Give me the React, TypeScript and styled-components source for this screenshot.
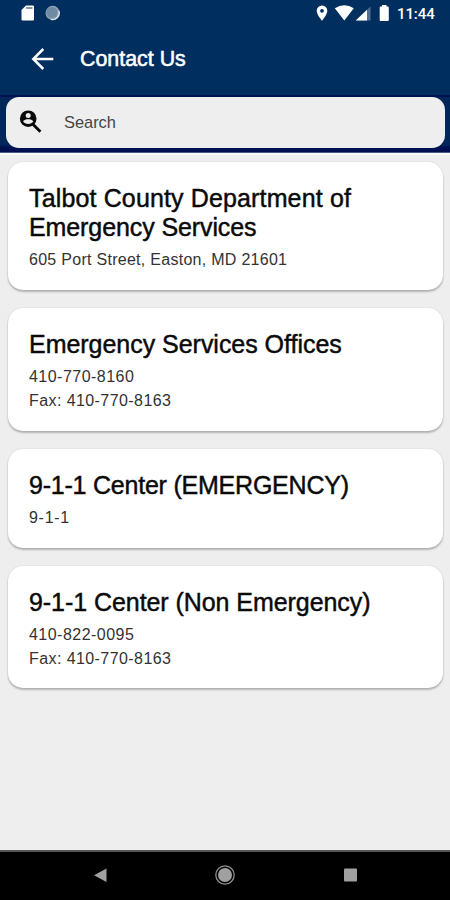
import React from "react";
import styled, { createGlobalStyle } from "styled-components";

const Global = createGlobalStyle`
  * { box-sizing: border-box; }
  body { margin: 0; background: #eee; font-family: "Liberation Sans", Arial, sans-serif; }
`;

const Screen = styled.div`
  width: 450px;
  height: 900px;
  display: flex;
  flex-direction: column;
  background: #eeeeee;
  overflow: hidden;
`;

const Header = styled.header`
  height: 153px;
  flex: none;
  background: #002e5f;
  border-bottom: 1px solid #4a5b86;
`;

const StatusBar = styled.div`
  height: 27px;
  display: flex;
  justify-content: space-between;
`;

const Time = styled.span`
  font: 500 15px/28px Roboto, sans-serif;
  color: #fff;
  width: 53px;
  letter-spacing: -0.1px;
`;

const StatusIcons = styled.div`
  display: flex;
`;

const TitleBar = styled.div`
  height: 68px;
  display: flex;
  align-items: center;
  padding: 0 0 4px 30px;
  gap: 26px;
`;

const Title = styled.h1`
  margin: 0;
  font-size: 21.4px;
  font-weight: 400;
  line-height: 26px;
  color: #fff;
  -webkit-text-stroke: 0.55px #fff;
`;

const SearchStrip = styled.div`
  height: 57px;
  padding: 2px 5px 4px 6px;
  background: linear-gradient(#001050 0 2px, #00265a 2px 50px, #001050 52px);
`;

const SearchBox = styled.label`
  display: flex;
  align-items: center;
  height: 51px;
  padding: 0 0 1px 13px;
  border-radius: 13px;
  background: #eeeeee;
  color: #444;
  font-size: 16.4px;
  gap: 21px;
`;

const Cards = styled.main`
  flex: 1;
  display: flex;
  flex-direction: column;
  padding: 7px 7px 0 8px;
  gap: 18px;
  border-top: 2px solid #f8f8f8;
`;

const Card = styled.section<{ $height: number }>`
  height: ${(p) => p.$height}px;
  padding: 22px 21px 0;
  border-radius: 15px;
  background: #fff;
  box-shadow: 0 2px 2px rgba(0, 0, 0, 0.24), 0 0 2px rgba(0, 0, 0, 0.12);
`;

const Name = styled.h2`
  margin: 0 0 6px;
  color: #0a0a0a;
  font-size: 25px;
  font-weight: 400;
  line-height: 29px;
  -webkit-text-stroke: 0.45px #0a0a0a;
`;

const NameLine = styled.span<{ $tracking: number }>`
  display: block;
  white-space: nowrap;
  letter-spacing: ${(p) => p.$tracking}px;
`;

const Detail = styled.p<{ $tracking: number }>`
  margin: 0;
  color: #333;
  font-size: 16px;
  line-height: 24px;
  letter-spacing: ${(p) => p.$tracking}px;
  white-space: nowrap;
`;

const NavBar = styled.nav`
  height: 50px;
  flex: none;
  background: #000;
  border-top: 2px solid #555;
  display: flex;
  align-items: center;
  justify-content: space-around;
  padding: 0 37px 2px;
`;

type Line = { text: string; tracking: number };
type Contact = { name: Line[]; lines: Line[]; height: number };

const contacts: Contact[] = [
  {
    name: [
      { text: "Talbot County Department of", tracking: 0.14 },
      { text: "Emergency Services", tracking: -0.1 },
    ],
    lines: [{ text: "605 Port Street, Easton, MD 21601", tracking: 0.28 }],
    height: 128,
  },
  {
    name: [{ text: "Emergency Services Offices", tracking: -0.03 }],
    lines: [
      { text: "410-770-8160", tracking: 0.47 },
      { text: "Fax: 410-770-8163", tracking: 0.42 },
    ],
    height: 123,
  },
  {
    name: [{ text: "9-1-1 Center (EMERGENCY)", tracking: -0.22 }],
    lines: [{ text: "9-1-1", tracking: 0.7 }],
    height: 99,
  },
  {
    name: [{ text: "9-1-1 Center (Non Emergency)", tracking: -0.06 }],
    lines: [
      { text: "410-822-0095", tracking: 0.47 },
      { text: "Fax: 410-770-8163", tracking: 0.42 },
    ],
    height: 122,
  },
];

const NotificationIcons = () => (
  <svg width="70" height="27" viewBox="0 0 70 27">
    <path d="M26 5.500h7q1 0 1 1v13q0 1-1 1H22.500q-1 0-1-1V10z" fill="#fff" />
    <path d="M26 8h6.500" stroke="#4c6788" strokeWidth="1.300" />
    <circle cx="52.700" cy="13" r="7.200" fill="#8fa3b5" />
    <circle cx="52" cy="12.500" r="5.500" fill="#6f8ba4" />
    <path d="M59 11a6.800 6.800 0 0 1-8 8.400" fill="none" stroke="#d4dfe7" strokeWidth="1.300" />
  </svg>
);

const SystemIcons = () => (
  <svg width="82" height="27" viewBox="315 0 82 27">
    <path fillRule="evenodd" d="M322 5.500a5.300 5.300 0 0 0-5.300 5.300c0 4 5.300 9.900 5.300 9.900s5.300-5.900 5.300-9.900A5.300 5.300 0 0 0 322 5.500zm0 3.400a1.900 1.900 0 1 1 0 3.800 1.900 1.900 0 0 1 0-3.800z" fill="#fff" />
    <path d="M334.800 8.300q9.500-6 19 0L344.300 20.500z" fill="#fff" />
    <path d="M370.500 6.500v14H356z" fill="#526f90" />
    <path d="M367 9.800v10.700h-11.300z" fill="#fff" />
    <path d="M382 5h4.500v1.500h1.300q1 0 1 1v12.500q0 1-1 1h-7.100q-1 0-1-1v-12.500q0-1 1-1h1.300z" fill="#fff" />
  </svg>
);

const BackIcon = () => (
  <svg width="24" height="24" viewBox="0 0 24 24" fill="none" stroke="#fff" strokeWidth="2.500">
    <path d="M23.300 12H3.500M13.300 2L3.300 12l10 10" />
  </svg>
);

const PersonSearchIcon = () => (
  <svg width="24" height="24" viewBox="0 0 24 24">
    <path d="M13.200 13.500l8.200 8.300" stroke="#0a0a0a" strokeWidth="2.900" fill="none" />
    <circle cx="9.200" cy="8.700" r="8.300" fill="#0a0a0a" />
    <circle cx="9.200" cy="5.500" r="2.500" fill="#eee" />
    <path d="M4 11.300C5 9.800 7.200 9.200 9.200 9.200s4.200.6 5.200 2.100C13.200 13.200 11.400 14 9.200 14S5.200 13.200 4 11.300z" fill="#eee" />
  </svg>
);

export default function App() {
  return (
    <>
      <Global />
      <Screen>
        <Header>
          <StatusBar>
            <NotificationIcons />
            <StatusIcons>
              <SystemIcons />
              <Time>11:44</Time>
            </StatusIcons>
          </StatusBar>
          <TitleBar>
            <BackIcon />
            <Title>Contact Us</Title>
          </TitleBar>
          <SearchStrip>
            <SearchBox>
              <PersonSearchIcon />
              <span>Search</span>
            </SearchBox>
          </SearchStrip>
        </Header>
        <Cards>
          {contacts.map((c) => (
            <Card key={c.name[0].text} $height={c.height}>
              <Name>
                {c.name.map((n) => (
                  <NameLine key={n.text} $tracking={n.tracking}>{n.text}</NameLine>
                ))}
              </Name>
              {c.lines.map((line) => (
                <Detail key={line.text} $tracking={line.tracking}>{line.text}</Detail>
              ))}
            </Card>
          ))}
        </Cards>
        <NavBar>
          <svg width="20" height="20" viewBox="0 0 20 20">
            <path d="M17.500 3.500v13.500L5 10.200z" fill="#a0a0a0" />
          </svg>
          <svg width="22" height="22" viewBox="0 0 22 22">
            <circle cx="11" cy="11" r="9.200" fill="none" stroke="#8e8e8e" strokeWidth="1.300" />
            <circle cx="11" cy="11" r="7" fill="#a0a0a0" />
          </svg>
          <svg width="20" height="20" viewBox="0 0 20 20">
            <rect x="3" y="3.500" width="13" height="13" rx="1" fill="#a0a0a0" />
          </svg>
        </NavBar>
      </Screen>
    </>
  );
}
